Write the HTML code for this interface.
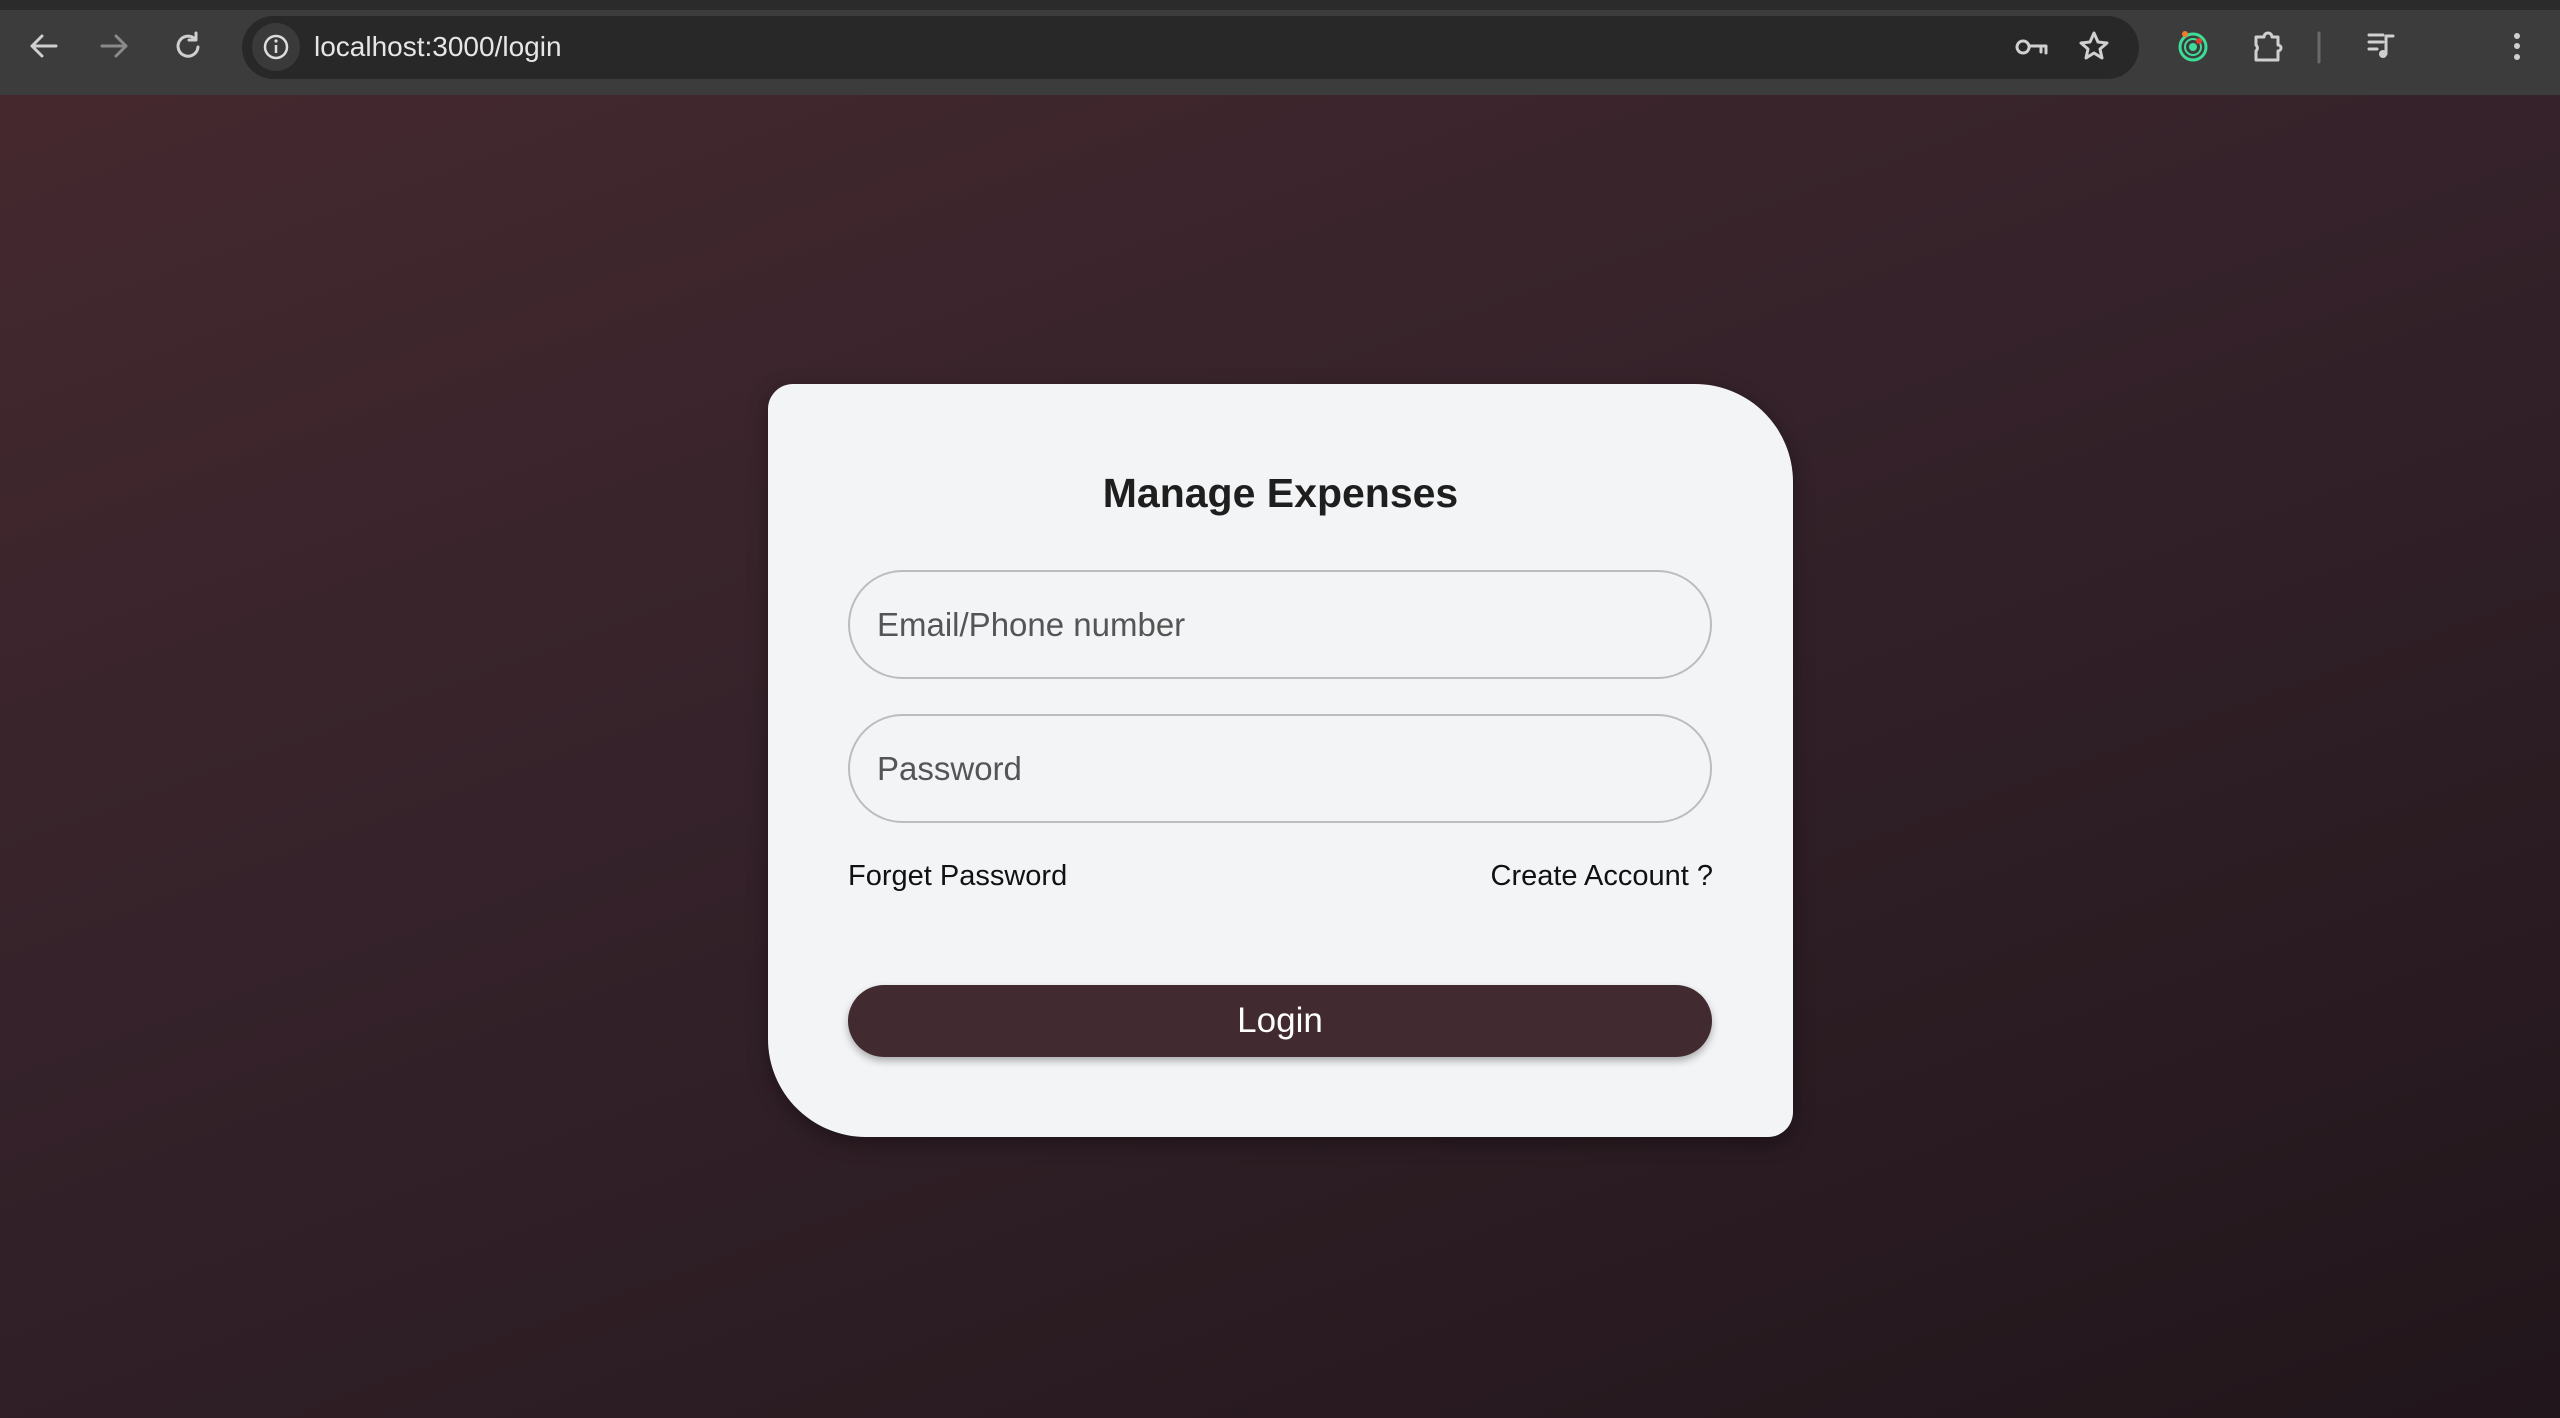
<!DOCTYPE html>
<html><head><meta charset="utf-8">
<style>
*{margin:0;padding:0;box-sizing:border-box}
html,body{width:2560px;height:1418px;overflow:hidden;font-family:"Liberation Sans",sans-serif}
body{background:linear-gradient(160deg,#46292f 0%,#35222a 45%,#21161b 100%);position:relative}
.top{position:absolute;left:0;top:0;width:2560px;height:95px;background:#3c3c3c}
.strip{position:absolute;left:0;top:0;width:2560px;height:10px;background:#2b2b2b}
.url{position:absolute;left:242px;top:16px;width:1897px;height:63px;border-radius:32px;background:#282828}
.url .i{position:absolute;left:10px;top:7px;width:48px;height:48px;border-radius:50%;background:#3a3a3a}
.url span{position:absolute;left:72px;top:15px;font-size:28px;color:#e6e6e6}
svg{position:absolute}
.card{position:absolute;left:768px;top:384px;width:1025px;height:753px;background:#f3f4f6;border-radius:25px 98px 25px 98px;box-shadow:0 6px 20px rgba(0,0,0,.35)}
h1{position:absolute;left:0;width:100%;top:86px;text-align:center;font-size:41px;font-weight:bold;color:#1e1e1e}
.in{position:absolute;left:80px;width:864px;height:109px;border:2px solid #bcbcbe;border-radius:55px;font-size:33px;color:#555;padding-left:27px;line-height:105px}
.lk{position:absolute;top:476px;font-size:29px;color:#111}
.btn{position:absolute;left:80px;top:601px;width:864px;height:72px;border-radius:36px;background:#422a31;color:#fff;font-size:35px;text-align:center;line-height:72px;box-shadow:0 4px 8px rgba(0,0,0,.3)}
</style></head><body>
<div class="top"></div>
<div class="strip"></div>
<div class="url"><div class="i"></div>
<svg width="48" height="48" style="left:10px;top:7px"><circle cx="24" cy="24" r="11" fill="none" stroke="#ddd" stroke-width="2.5"/><path d="M24 22v8" stroke="#ddd" stroke-width="2.5"/><circle cx="24" cy="18" r="1.6" fill="#ddd"/></svg>
<span>localhost:3000/login</span></div>
<svg width="2560" height="95" style="left:0;top:0">
<g fill="none" stroke="#d0d0d0" stroke-width="3" stroke-linecap="round" stroke-linejoin="round">
<path d="M56 46H32M42 36L32 46L42 56"/>
<path d="M102 46H126M116 36L126 46L116 56" stroke="#8a8a8a"/>
<path d="M195 39A10 10 0 1 0 198 47M196 33V40H189"/>
<path d="M2023 41a6 6 0 1 0 0.1 0M2029 46H2046V53M2041 46V52"/>
<path d="M2094 33l4 9 9 1-7 6 2 9-8-5-8 5 2-9-7-6 9-1z"/>
<path d="M2256 37h8a4 4 0 0 1 8 0h6v8a3 3 0 0 1 0 6v9h-22v-9a4 4 0 0 0 0-6z"/>
<path d="M2369 35h14M2369 42h14M2369 49h8M2386 36h7M2386 36V54"/>
</g>
<path d="M2319 33V62" stroke="#6a6a6a" stroke-width="3" stroke-linecap="round"/>
<circle cx="2383" cy="54" r="4" fill="#d0d0d0"/>
<circle cx="2193" cy="47" r="13" fill="none" stroke="#3ddc97" stroke-width="3"/>
<circle cx="2193" cy="47" r="8" fill="none" stroke="#3ddc97" stroke-width="2"/>
<circle cx="2193" cy="47" r="4" fill="#3ddc97"/>
<circle cx="2185" cy="34" r="3" fill="#f07a2a"/><circle cx="2199" cy="41" r="3" fill="#e0402a"/>
<g fill="#d0d0d0"><circle cx="2517" cy="36" r="3"/><circle cx="2517" cy="46" r="3"/><circle cx="2517" cy="57" r="3"/></g>
</svg>
<div class="card">
<h1>Manage Expenses</h1>
<div class="in" style="top:186px">Email/Phone number</div>
<div class="in" style="top:330px">Password</div>
<div class="lk" style="left:80px">Forget Password</div>
<div class="lk" style="right:80px">Create Account ?</div>
<div class="btn">Login</div>
</div>
</body></html>
